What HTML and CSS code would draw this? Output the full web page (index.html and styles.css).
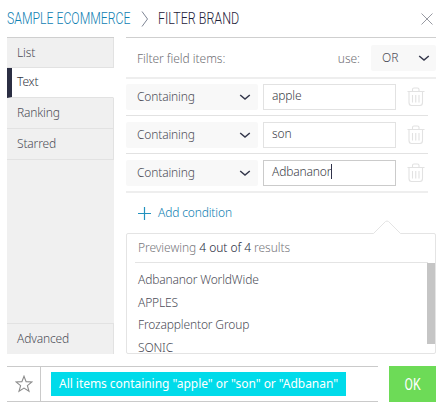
FILE: index.html
```html
<!DOCTYPE html>
<html lang="en">
<head>
    <meta charset="UTF-8">
    <meta name="viewport" content="width=device-width, initial-scale=1.0">
    <title>Filter Brand</title>
    <link rel="stylesheet" href="styles.css">
</head>
<body>
    <svg width="0" height="0" class="defs">
        <symbol id="chevron" viewBox="0 0 12 8">
            <path d="M1.2 2 L6 6 L10.8 2" fill="none" stroke="#34374b" stroke-width="1.5"/>
        </symbol>
        <symbol id="trash" viewBox="0 0 18 20">
            <path d="M0.5 4.5H17.5M5.5 4V2.5Q5.5 1 7 1H10.5Q12 1 12 2.5V4M2 5V15.5Q2 18.5 4.5 18.5H13Q15.5 18.5 15.5 15.5V5M5.5 8V15.5M8.75 8V15.5M12 8V15.5" fill="none" stroke="#e2e2e2" stroke-width="1.1"/>
        </symbol>
    </svg>
    <div class="dialog">
        <header class="header">
            <a class="crumb" href="#"><span class="narrow">SAMPLE ECOMMERCE</span></a>
            <svg class="crumb-arrow" width="8" height="18" viewBox="0 0 8 18"><path d="M1 1.5L6.5 9L1 16.5" fill="none" stroke="#7e8594"/></svg>
            <h1 class="title"><span class="narrow">FILTER BRAND</span></h1>
            <svg class="close" width="12" height="12" viewBox="0 0 12 12"><path d="M0.5 0.5L11.5 11.5M11.5 0.5L0.5 11.5" stroke="#989aa2" fill="none"/></svg>
        </header>
        <div class="columns">
            <nav class="sidebar">
                <a class="tab">List</a>
                <a class="tab active">Text</a>
                <a class="tab">Ranking</a>
                <a class="tab">Starred</a>
                <a class="tab advanced">Advanced</a>
            </nav>
            <main class="main">
                <div class="toolbar">
                    <span class="label-items">Filter field items:</span>
                    <span class="label-use">use:</span>
                    <div class="select select-or"><span>OR</span><svg class="chevron" width="12" height="8"><use href="#chevron"/></svg></div>
                </div>
                <div class="condition">
                    <div class="select"><span>Containing</span><svg class="chevron" width="12" height="8"><use href="#chevron"/></svg></div>
                    <div class="field"><span>apple</span></div>
                    <svg class="trash" width="18" height="20"><use href="#trash"/></svg>
                </div>
                <div class="condition">
                    <div class="select"><span>Containing</span><svg class="chevron" width="12" height="8"><use href="#chevron"/></svg></div>
                    <div class="field"><span>son</span></div>
                    <svg class="trash" width="18" height="20"><use href="#trash"/></svg>
                </div>
                <div class="condition last">
                    <div class="select"><span>Containing</span><svg class="chevron" width="12" height="8"><use href="#chevron"/></svg></div>
                    <div class="field focused"><span>Adbananor</span><i class="caret"></i></div>
                    <svg class="trash" width="18" height="20"><use href="#trash"/></svg>
                </div>
                <a class="add">
                    <svg width="13" height="13" viewBox="0 0 13 13"><path d="M6.5 0V13M0 6.5H13" stroke="#2292bf" stroke-width="1.2"/></svg>
                    <span>Add condition</span>
                </a>
                <section class="preview">
                    <svg class="notch" width="28" height="14" viewBox="0 0 28 14"><path d="M0.5 13.5L12.5 1.5Q14 0.5 15.5 1.5L27.5 13.5V14H0.5Z" fill="#fff"/><path d="M0.5 13.5L12.5 1.5Q14 0.5 15.5 1.5L27.5 13.5" fill="none" stroke="#e4e4e4"/></svg>
                    <p class="preview-head">Previewing <b>4 out of 4</b> results</p>
                    <ul class="results">
                        <li>Adbananor WorldWide</li>
                        <li>APPLES</li>
                        <li>Frozapplentor Group</li>
                        <li>SONIC</li>
                    </ul>
                    <div class="scrollbar"></div>
                </section>
            </main>
        </div>
        <footer class="footer">
            <div class="summary">
                <div class="star"><svg width="18" height="18" viewBox="0 0 18 18"><path d="M9 1.2L11.1 6.6L17 6.9L12.4 10.6L14 16.3L9 13.1L4 16.3L5.6 10.6L1 6.9L6.9 6.6Z" fill="none" stroke="#8c8c8c" stroke-width="1.1"/></svg></div>
                <span class="pill">All items containing "apple" or "son" or "Adbanan"</span>
            </div>
            <button class="ok"><span class="narrow">OK</span></button>
        </footer>
    </div>
</body>
</html>
```

FILE: styles.css
```css
* {
    box-sizing: border-box;
}

body {
    margin: 0;
    background: #fff;
    color: #4c4d57;
    font-family: "Noto Sans", sans-serif;
    font-size: 12px;
    font-weight: 300;
    line-height: 16px;
    letter-spacing: -0.15px;
}

.defs {
    display: none;
}

.dialog {
    width: 436px;
    height: 405px;
    padding-left: 7px;
}

.header {
    display: flex;
    align-items: center;
    height: 37px;
    font-family: Roboto, sans-serif;
    font-size: 16px;
    white-space: nowrap;
    letter-spacing: 0;
}

/* condensed caps */
.narrow {
    display: inline-block;
    transform: scaleX(0.765);
    transform-origin: left;
}

.crumb {
    width: 123px;
    color: #0f80b2;
    text-decoration: none;
}

.crumb-arrow {
    flex: none;
    margin: 0 9px 0 11px;
}

.title {
    width: 81px;
    margin: 0;
    color: #1d2038;
    font-size: 16px;
    font-weight: 300;
}

.title .narrow {
    transform: scaleX(0.78);
}

.close {
    margin: 1px 3px 0 auto;
}

.columns {
    display: flex;
    gap: 12px;
    height: 317px;
}

.sidebar {
    display: flex;
    flex-direction: column;
    width: 107px;
    background: #f0f0f0;
    border-top: 1px solid #cfcfcf;
}

.tab {
    height: 31px;
    padding: 7px 10px;
    border-right: 1px solid #e2e2e2;
    border-bottom: 1px solid #e2e2e2;
}

.tab:first-child {
    height: 30px;
}

.tab.active {
    height: 30px;
    padding: 6px 5px;
    background: #fff;
    border-left: 5px solid #2b2e43;
    border-right-color: #fff;
    color: #33353f;
}

.tab.advanced {
    margin-top: auto;
    border-top: 1px solid #e2e2e2;
    border-bottom: 0;
}

.main {
    display: flex;
    flex-direction: column;
    width: 310px;
    border-top: 1px solid #cfcfcf;
}

.toolbar {
    display: flex;
    align-items: center;
    height: 41px;
    padding-left: 11px;
    border-bottom: 2px solid #eee;
    color: #707075;
    letter-spacing: -0.05px;
}

.label-items {
    padding-top: 2px;
}

.label-use {
    margin-left: auto;
    margin-right: 11px;
    padding-top: 2px;
}

.select {
    display: flex;
    align-items: center;
    justify-content: space-between;
    width: 132px;
    height: 26px;
    padding: 0 7px 0 11px;
    background: #f8f8f8;
    border-radius: 2px;
    color: #4c4d57;
}

.select-or {
    width: 65px;
    padding-right: 6px;
}

.condition {
    display: flex;
    align-items: center;
    width: 302px;
    height: 38px;
    border-bottom: 1px solid #e2e2e2;
}

.condition:nth-child(2) {
    height: 37px;
}

.condition.last {
    height: 39px;
    border-bottom: 2px solid #eee;
}

.field {
    display: flex;
    align-items: center;
    width: 133px;
    height: 26px;
    margin-left: 5px;
    padding: 0 8px 2px;
    border: 1px solid #e2e2e2;
    color: #3c3e48;
}

.field.focused {
    border-color: #cbcbcb;
}

.caret {
    width: 1px;
    height: 15px;
    background: #30334a;
}

.trash {
    margin-left: 11px;
}

.add {
    display: flex;
    align-items: center;
    gap: 7px;
    height: 40px;
    padding-left: 12px;
    color: #0f80b2;
}

.preview {
    position: relative;
    flex: 1;
    min-height: 0;
    border: 1px solid #e4e4e4;
    border-radius: 2px;
}

.notch {
    position: absolute;
    top: -14px;
    right: 34px;
}

.preview-head {
    height: 29px;
    margin: 0 7px 0 8px;
    padding: 6px 3px;
    border-bottom: 1px solid #e4e4e4;
    color: #77777c;
    letter-spacing: -0.05px;
}

.preview-head b {
    color: #25273a;
    font-weight: 300;
}

.results {
    height: 90px;
    margin: 0;
    padding: 6px 11px 0;
    line-height: 22.7px;
    list-style: none;
    overflow: hidden;
}

.scrollbar {
    position: absolute;
    top: 29px;
    right: 0;
    width: 8px;
    height: 81px;
    background: #c5c5c5;
}

.footer {
    display: flex;
    gap: 11px;
    height: 36px;
    margin-top: 12px;
}

.summary {
    display: flex;
    align-items: center;
    width: 371px;
    border-top: 1px solid #cacaca;
    border-bottom: 1px solid #cacaca;
}

.star {
    display: flex;
    align-items: center;
    justify-content: center;
    width: 34px;
    height: 34px;
    border-right: 1px solid #cacaca;
}

.pill {
    width: 295px;
    height: 24px;
    margin-left: 10px;
    padding-left: 8px;
    background: #00dbea;
    color: #fff;
    font-weight: 400;
    line-height: 24px;
    letter-spacing: -0.04px;
    white-space: nowrap;
}

.ok {
    width: 47px;
    padding: 0;
    background: #6ddb57;
    border: 0;
    color: #fff;
    font-family: Roboto, sans-serif;
    font-size: 16px;
}

.ok .narrow {
    transform-origin: center;
}
```
